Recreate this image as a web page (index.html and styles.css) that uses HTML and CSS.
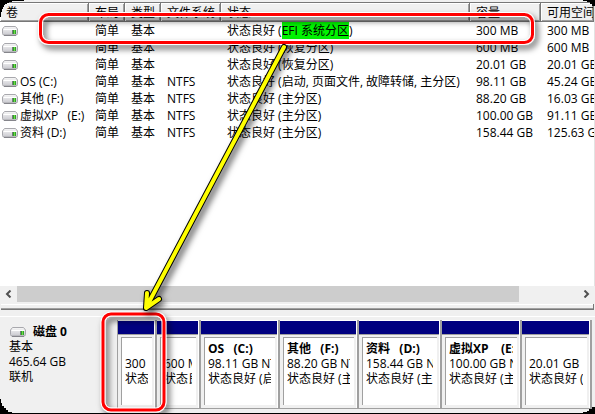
FILE: index.html
```html
<!DOCTYPE html>
<html lang="zh-CN">
<head>
<meta charset="utf-8">
<title>磁盘管理</title>
<link rel="stylesheet" href="styles.css">
</head>
<body>
<svg class="defs" aria-hidden="true">
  <defs>
    <linearGradient id="metal" x1="0" y1="0" x2="0" y2="1">
      <stop offset="0" stop-color="#f8f8f8"/>
      <stop offset="1" stop-color="#c8c8ce"/>
    </linearGradient>
    <symbol id="drive" viewBox="0 0 16 10">
      <path d="M2.500 .5H13.500L15.500 3V7.500Q15.500 9 14 9H2Q.5 9 .5 7.500V3Z" fill="url(#metal)" stroke="#a8a8ad"/>
      <path d="M1.500 3.500H14.500" stroke="#fff"/>
      <path d="M2 9.500H14" stroke="#85858b"/>
      <path d="M10 4H11V8H10Z" fill="#77777c"/>
      <path d="M11 4H14V8H11Z" fill="#2da329"/>
      <path d="M12 4H13V8H12Z" fill="#72d846"/>
    </symbol>
  </defs>
</svg>
<main class="window">
  <section class="volumes">
    <table class="list">
      <colgroup><col class="c-name"><col class="c-short"><col class="c-short"><col class="c-fs"><col class="c-status"><col class="c-size"><col></colgroup>
      <thead>
        <tr><th>卷</th><th>布局</th><th>类型</th><th>文件系统</th><th>状态</th><th>容量</th><th>可用空间</th></tr>
      </thead>
      <tbody>
        <tr><td><svg class="drive"><use href="#drive"/></svg></td><td>简单</td><td>基本</td><td></td><td>状态良好 (<mark>EFI 系统分区</mark>)</td><td>300 MB</td><td>300 MB</td></tr>
        <tr><td><svg class="drive"><use href="#drive"/></svg></td><td>简单</td><td>基本</td><td></td><td>状态良好 (恢复分区)</td><td>600 MB</td><td>600 MB</td></tr>
        <tr><td><svg class="drive"><use href="#drive"/></svg></td><td>简单</td><td>基本</td><td></td><td>状态良好 (恢复分区)</td><td>20.01 GB</td><td>20.01 GB</td></tr>
        <tr><td><svg class="drive"><use href="#drive"/></svg>OS (C:)</td><td>简单</td><td>基本</td><td>NTFS</td><td>状态良好 (启动, 页面文件, 故障转储, 主分区)</td><td>98.11 GB</td><td>45.24 GB</td></tr>
        <tr><td><svg class="drive"><use href="#drive"/></svg>其他 (F:)</td><td>简单</td><td>基本</td><td>NTFS</td><td>状态良好 (主分区)</td><td>88.20 GB</td><td>16.03 GB</td></tr>
        <tr><td><svg class="drive"><use href="#drive"/></svg>虚拟XP&nbsp; &nbsp;(E:)</td><td>简单</td><td>基本</td><td>NTFS</td><td>状态良好 (主分区)</td><td>100.00 GB</td><td>91.11 GB</td></tr>
        <tr><td><svg class="drive"><use href="#drive"/></svg>资料 (D:)</td><td>简单</td><td>基本</td><td>NTFS</td><td>状态良好 (主分区)</td><td>158.44 GB</td><td>125.63 GB</td></tr>
      </tbody>
    </table>
  </section>
  <div class="scrollbar">
    <button class="step" type="button" aria-label="向左滚动"><svg viewBox="0 0 7 8"><path d="M5.500 .5L2 4L5.500 7.500"/></svg></button>
    <div class="track"><div class="thumb"></div></div>
    <button class="step" type="button" aria-label="向右滚动"><svg viewBox="0 0 7 8"><path d="M1.500 .5L5 4L1.500 7.500"/></svg></button>
  </div>
  <div class="splitter"></div>
  <section class="disk">
    <div class="disk-info">
      <h2><svg class="drive"><use href="#drive"/></svg>磁盘 0</h2>
      <p>基本</p>
      <p>465.64 GB</p>
      <p>联机</p>
    </div>
    <div class="partitions">
      <article class="part"><div class="box"><div class="text"><h3></h3><p>300 MB</p><p>状态良好</p></div></div></article>
      <article class="part"><div class="box"><div class="text"><h3></h3><p>600 MB</p><p>状态良好</p></div></div></article>
      <article class="part"><div class="box"><div class="text"><h3>OS&nbsp; &nbsp;(C:)</h3><p>98.11 GB NTFS</p><p>状态良好 (启动)</p></div></div></article>
      <article class="part"><div class="box"><div class="text"><h3>其他&nbsp; &nbsp;(F:)</h3><p>88.20 GB NTFS</p><p>状态良好 (主分区)</p></div></div></article>
      <article class="part"><div class="box"><div class="text"><h3>资料&nbsp; &nbsp;(D:)</h3><p>158.44 GB NTFS</p><p>状态良好 (主分区)</p></div></div></article>
      <article class="part"><div class="box"><div class="text"><h3>虚拟XP&nbsp; &nbsp; (E:)</h3><p>100.00 GB NTFS</p><p>状态良好 (主分区)</p></div></div></article>
      <article class="part"><div class="box"><div class="text"><h3></h3><p>20.01 GB</p><p>状态良好 (恢复分区)</p></div></div></article>
    </div>
  </section>
  <svg class="notes" viewBox="0 0 595 414" aria-hidden="true">
    <defs>
      <filter id="shade" x="-30%" y="-80%" width="160%" height="260%">
        <feDropShadow dx="3" dy="4" stdDeviation="3" flood-color="#000" flood-opacity=".6"/>
      </filter>
    </defs>
    <g fill="none" filter="url(#shade)">
      <rect class="ring-edge" x="40.500" y="14.500" width="492" height="28" rx="8"/>
      <rect class="ring" x="40.500" y="14.500" width="492" height="28" rx="8"/>
    </g>
    <g fill="none" filter="url(#shade)">
      <rect class="ring-edge" x="103" y="314" width="61" height="96" rx="8"/>
      <rect class="ring" x="103" y="314" width="61" height="96" rx="8"/>
    </g>
    <g class="arrow" filter="url(#shade)">
      <path class="arrow-edge" d="M284 47L148 304M147 293L146 308L159 299"/>
      <path class="arrow-fill" d="M284 47L148 304M147 293L146 308L159 299"/>
    </g>
    <path d="M0 0H24V1H12V2H9V3H7V4H5V5H4V7H3V9H2V12H1V17H0Z"/>
    <path d="M595 0H583V1H587V2H590V4H592V6H595Z"/>
    <path d="M0 399H1V403H2V406H4V408H6V410H8V412H12V413H583V412H587V411H589V409H592V407H595V414H0Z"/>
  </svg>
</main>
</body>
</html>
```
FILE: styles.css
```css
*, *::before { box-sizing: border-box; }

body {
  margin: 0;
  background: #f0f0f0;
  color: #000;
  font: 12px/15px "Open Sans", "Noto Sans CJK SC", sans-serif;
}

h2, h3, p { margin: 0; font-size: 12px; }

.defs { position: absolute; width: 0; height: 0; }

.window {
  position: relative;
  display: flex;
  flex-direction: column;
  min-height: 100vh;
  padding-top: 2px;
  overflow: hidden;
}

.volumes {
  flex: 1;
  overflow: hidden;
  background: #fff;
  border-top: 1px solid #777;
  border-right: 1px solid #e3e3e3;
}

.list {
  width: 100%;
  table-layout: fixed;
  border-collapse: separate;
  border-spacing: 0;
}

.c-name { width: 89px; }
.c-short { width: 36px; }
.c-fs { width: 60px; }
.c-status { width: 249px; }
.c-size { width: 71px; }

th, td {
  height: 17px;
  padding: 0 0 0 6px;
  line-height: 17px;
  font-weight: 400;
  text-align: left;
  white-space: nowrap;
  overflow: hidden;
}

th {
  height: 19px;
  background: #f0f0f0;
  border-right: 1px solid #777;
  border-bottom: 1px solid #777;
  box-shadow: inset 1px 1px #fff, inset -1px -1px #a0a0a0;
}

td:first-child { padding-left: 2px; }

mark { display: inline-block; background: #00f400; color: #000; }

.drive {
  width: 16px;
  height: 10px;
  margin-right: 2px;
  vertical-align: -1px;
}

.scrollbar { display: flex; height: 16px; }

.step {
  display: flex;
  align-items: center;
  justify-content: center;
  width: 17px;
  padding: 0;
  border: 0;
  background: #f0f0f0;
}

.step svg { width: 7px; height: 8px; fill: none; stroke: #505050; stroke-width: 2; }

.track { flex: 1; }
.thumb { width: calc(90% - 3px); height: 100%; background: #cdcdcd; }

.splitter {
  height: 6px;
  margin: 2px 1px 6px;
  border: solid #777;
  border-width: 0 1px 1px 0;
  box-shadow: inset 0 1px #fff, inset 0 -1px #a0a0a0;
}

.disk {
  display: flex;
  padding: 0 3px 5px 0;
  border-top: 1px solid #fff;
}

.disk-info { width: 117px; padding: 7px 0 0 9px; }
.disk-info h2 { display: flex; align-items: center; gap: 5px; }
.disk-info h2 .drive { margin: 0 2px 0 1px; }

.partitions {
  flex: 1;
  display: grid;
  grid-template-columns: 39fr 44fr 79fr 79fr 83fr 80fr 70fr;
  margin-top: 3px;
  border-left: 1px solid #a0a0a0;
  border-bottom: 1px solid #a0a0a0;
}

.part {
  min-width: 0;
  padding-bottom: 3px;
  border-right: 2px solid #a0a0a0;
  box-shadow: inset -1px 0 #fff;
}

.part::before {
  content: "";
  display: block;
  height: 15px;
  margin-right: 1px;
  background: #000080;
  border-top: 1px solid #fff;
  border-bottom: 1px solid #a0a0a0;
}

.box {
  height: 68px;
  margin: 2px 3px 0;
  padding: 3px 4px 0 3px;
  background: #fff;
  border-left: 1px solid #a0a0a0;
  border-top: 1px solid #a0a0a0;
}

.text { overflow: hidden; white-space: nowrap; }
.text h3 { height: 15px; }

.notes {
  position: absolute;
  top: 0;
  left: 0;
  width: 100%;
  pointer-events: none;
}

.ring { stroke: #f00; stroke-width: 3; }
.ring-edge { stroke: #fff; stroke-width: 5; }
.arrow { fill: none; stroke-linecap: round; stroke-linejoin: round; }
.arrow-edge { stroke: #000; stroke-width: 6; }
.arrow-fill { stroke: #ff0; stroke-width: 4; }
```
